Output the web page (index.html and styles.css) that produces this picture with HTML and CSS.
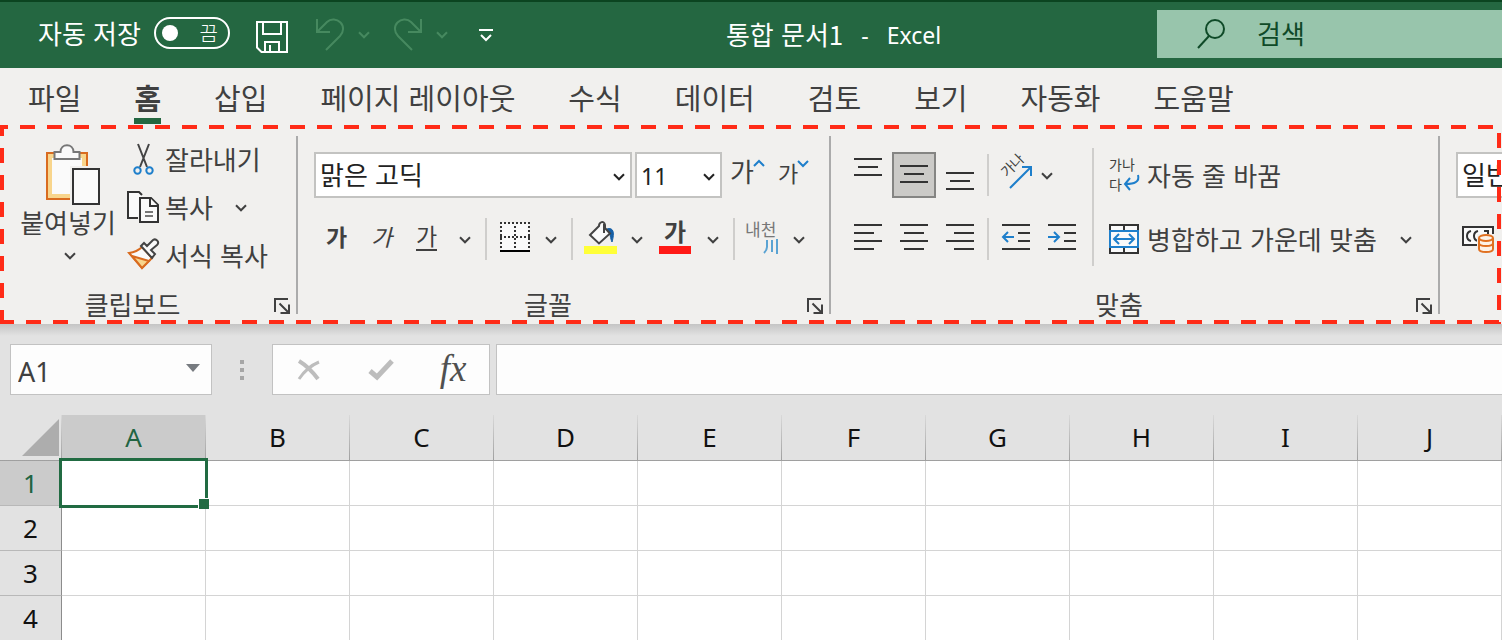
FILE: index.html
```html
<!DOCTYPE html>
<html lang="ko">
<head>
<meta charset="utf-8">
<meta name="viewport" content="width=device-width, initial-scale=1">
<title>통합 문서1 - Excel</title>
<link rel="stylesheet" href="styles.css">
</head>
<body>
<svg class="defs" aria-hidden="true">
  <symbol id="chevron" viewBox="0 0 12 8"><path d="M1 1.3 6 6.3 11 1.3" fill="none" stroke="currentColor" stroke-width="2"/></symbol>
  <symbol id="launcher" viewBox="0 0 18 18"><path d="M2 15V2H15M6.500 6.500 15 15M16 7.500V16H7.500" fill="none" stroke="currentColor" stroke-width="2"/></symbol>
</svg>

<header class="titlebar">
  <div class="quick">
    <span id="autosave">자동 저장</span>
    <button class="toggle" role="switch" aria-checked="false" aria-labelledby="autosave"><span class="knob"></span><span>끔</span></button>
    <button class="quick-btn save" aria-label="저장">
      <svg width="32" height="32" viewBox="0 0 32 32" fill="none" stroke="currentColor" stroke-width="2"><path d="M1 1H31V31H5.500L1 26.500ZM7 1V13H25V1M9 31V21H23V31M14 24V31"/></svg>
    </button>
    <button class="quick-btn dim" aria-label="실행 취소">
      <svg width="30" height="34" viewBox="0 0 30 34" fill="none" stroke="currentColor" stroke-width="2"><path d="M2 1V14H15M2 14 12 4C16 0 22 1 25.500 4.500S29 14 25 18L11 32"/></svg>
    </button>
    <button class="quick-more dim" aria-label="실행 취소 목록"><svg class="chev"><use href="#chevron"/></svg></button>
    <button class="quick-btn dim" aria-label="다시 실행">
      <svg width="30" height="34" viewBox="0 0 30 34" fill="none" stroke="currentColor" stroke-width="2"><path d="M28 1V14H15M28 14 18 4C14 0 8 1 4.500 4.500S1 14 5 18L19 32"/></svg>
    </button>
    <button class="quick-more dim" aria-label="다시 실행 목록"><svg class="chev"><use href="#chevron"/></svg></button>
    <button class="quick-more custom" aria-label="빠른 실행 도구 모음 사용자 지정">
      <svg width="16" height="14" viewBox="0 0 16 14" fill="none" stroke="currentColor" stroke-width="2"><path d="M1 2H15M3 7 8 12 13 7"/></svg>
    </button>
  </div>
  <h1 class="title"><span>통합 문서1</span><span class="latin">-</span><span class="latin">Excel</span></h1>
  <label class="search">
    <svg width="30" height="32" viewBox="0 0 30 32" fill="none" stroke="currentColor" stroke-width="2"><circle cx="18" cy="11" r="9"/><path d="M12 18 1 30"/></svg>
    <input type="search" placeholder="검색" aria-label="검색">
  </label>
</header>

<nav class="tabs">
  <a href="#file">파일</a>
  <a href="#home" class="current" aria-current="page">홈</a>
  <a href="#insert">삽입</a>
  <a href="#layout">페이지 레이아웃</a>
  <a href="#formulas">수식</a>
  <a href="#data">데이터</a>
  <a href="#review">검토</a>
  <a href="#view">보기</a>
  <a href="#automate">자동화</a>
  <a href="#help">도움말</a>
</nav>

<div class="ribbon">
  <section class="group clipboard">
    <div class="group-body">
      <button class="paste">
        <svg width="56" height="62" viewBox="0 0 56 62">
          <path d="M2 9H42V55H2Z" fill="#f8d58c" stroke="#d96b1f" stroke-width="2"/>
          <path d="M7 14H37V50H7Z" fill="#fafafa"/>
          <path d="M9.500 15V8H15.500C15.500 -1 28.500 -1 28.500 8H34.500V15Z" fill="#fafafa" stroke="#777" stroke-width="2"/>
          <path d="M25 22H56V62H25Z" fill="#f1f0ee"/>
          <path d="M28 25H54V60H28Z" fill="#fafafa" stroke="#333" stroke-width="2"/>
        </svg>
        <span>붙여넣기</span>
        <svg class="chev"><use href="#chevron"/></svg>
      </button>
      <div class="commands">
        <button class="command">
          <svg width="32" height="34" viewBox="0 0 32 34" fill="none" stroke-width="2"><path d="M11 2 20 25M22 2 13 25" stroke="#444"/><circle cx="10.500" cy="28.500" r="3.200" stroke="#1e7fcb"/><circle cx="22.500" cy="28.500" r="3.200" stroke="#1e7fcb"/></svg>
          <span>잘라내기</span>
        </button>
        <button class="command">
          <svg width="32" height="34" viewBox="0 0 32 34" fill="#fafafa" stroke="#333" stroke-width="2"><path d="M11 28H1V2H12L15 5"/><path d="M13 8H24L31 15V32H13Z"/><path d="M23 8V16H31"/><path d="M18 22H26M18 26H26" stroke="#777"/></svg>
          <span>복사</span>
          <svg class="chev"><use href="#chevron"/></svg>
        </button>
        <button class="command">
          <svg width="32" height="34" viewBox="0 0 32 34" stroke-width="2"><path d="M2 15Q10 14 15 9L25 20 15 30Z" fill="#fafafa" stroke="#d96b1f"/><path d="M5 18 22 23 15 30Z" fill="#f8d58c" stroke="#d96b1f"/><path d="M14 8 17 5 20 8 26 2C29 0 33 4 30 7L24 12 28 16 25 20Z" fill="#fafafa" stroke="#444"/></svg>
          <span>서식 복사</span>
        </button>
      </div>
    </div>
    <div class="group-foot"><h2>클립보드</h2><button class="launch" aria-label="클립보드 옵션"><svg width="18" height="18"><use href="#launcher"/></svg></button></div>
  </section>
  <div class="divider"></div>

  <section class="group font">
    <div class="group-body rows">
      <div class="row">
        <div class="combo font-name"><select aria-label="글꼴"><option>맑은 고딕</option></select><svg class="chev"><use href="#chevron"/></svg></div>
        <div class="combo font-size"><select aria-label="글꼴 크기"><option>11</option></select><svg class="chev"><use href="#chevron"/></svg></div>
        <button class="tool" aria-label="글꼴 크기 크게"><svg width="34" height="34" viewBox="0 0 34 34"><text x="-2" y="26" font-size="26">가</text><path d="M22 10 27 5 32 10" fill="none" stroke="#1e7fcb" stroke-width="2"/></svg></button>
        <button class="tool" aria-label="글꼴 크기 작게"><svg width="34" height="34" viewBox="0 0 34 34"><text x="2" y="26" font-size="22">가</text><path d="M22 5 27 10 32 5" fill="none" stroke="#1e7fcb" stroke-width="2"/></svg></button>
      </div>
      <div class="row">
        <button class="tool letter bold" aria-label="굵게">가</button>
        <button class="tool letter italic" aria-label="기울임꼴">가</button>
        <button class="tool letter" aria-label="밑줄"><span class="under">가</span></button>
        <button class="drop" aria-label="밑줄 종류"><svg class="chev"><use href="#chevron"/></svg></button>
        <span class="sep"></span>
        <button class="tool" aria-label="테두리">
          <svg width="32" height="32" viewBox="0 0 32 32" fill="none" stroke="#333" stroke-width="2"><path d="M2 2H30V29H2Z" fill="#fafafa" stroke="none"/><path d="M1 2H31M1 16H31M2 5V28M16 5V28M30 5V28" stroke-dasharray="2 2"/><path d="M1 30H31" stroke="#000"/></svg>
        </button>
        <button class="drop" aria-label="테두리 종류"><svg class="chev"><use href="#chevron"/></svg></button>
        <span class="sep"></span>
        <button class="tool" aria-label="채우기 색">
          <svg width="34" height="34" viewBox="0 0 34 34"><path d="M0 26H33V34H0Z" fill="#ffff38"/><path d="M23 9C29 7 31 12 28 22 26 18 27 14 23 9Z" fill="#155fa6" stroke="#155fa6"/><path d="M6 15 15 6C15 2 20 0 21 5V8L26 13.500 15 23.500Z" fill="#fafafa" stroke="#444" stroke-width="2"/><path d="M20 4V13" stroke="#444" stroke-width="2"/></svg>
        </button>
        <button class="drop" aria-label="채우기 색 목록"><svg class="chev"><use href="#chevron"/></svg></button>
        <button class="tool wide" aria-label="글꼴 색">
          <svg width="34" height="34" viewBox="0 0 34 34"><text x="6" y="21" font-size="24" font-weight="700">가</text><path d="M1 26H33V34H1Z" fill="#ff1a16"/></svg>
        </button>
        <button class="drop" aria-label="글꼴 색 목록"><svg class="chev"><use href="#chevron"/></svg></button>
        <span class="sep"></span>
        <button class="tool" aria-label="윗주 필드">
          <svg width="36" height="36" viewBox="0 0 36 36"><text x="0" y="17" font-size="17" class="pale">내천</text><path d="M22 21V28Q22 31 19 34M27 21V33M32 20V35" fill="none" stroke="#5aa3d3" stroke-width="2"/></svg>
        </button>
        <button class="drop" aria-label="윗주 목록"><svg class="chev"><use href="#chevron"/></svg></button>
      </div>
    </div>
    <div class="group-foot"><h2>글꼴</h2><button class="launch" aria-label="글꼴 옵션"><svg width="18" height="18"><use href="#launcher"/></svg></button></div>
  </section>
  <div class="divider"></div>

  <section class="group align">
    <div class="group-body">
      <div class="rows align-tools">
        <div class="row">
          <button class="tool line" aria-label="위쪽 맞춤"><svg width="30" height="36" viewBox="0 0 30 36"><path d="M1 3H29M5 11H25M1 19H29"/></svg></button>
          <button class="tool line pressed" aria-label="가운데 맞춤(세로)" aria-pressed="true"><svg width="30" height="36" viewBox="0 0 30 36"><path d="M1 9H29M5 17H25M1 25H29"/></svg></button>
          <button class="tool line" aria-label="아래쪽 맞춤"><svg width="30" height="36" viewBox="0 0 30 36"><path d="M1 17H29M5 25H25M1 33H29"/></svg></button>
          <span class="sep snug"></span>
          <button class="tool orient" aria-label="방향">
            <svg width="34" height="34" viewBox="0 0 34 34"><text x="0" y="0" font-size="14" transform="translate(9 22) rotate(-45)">가나</text><path d="M12 32 32 12M24 11H33V20" fill="none" stroke="#1e7fcb" stroke-width="2"/></svg>
          </button>
          <button class="drop slim" aria-label="방향 목록"><svg class="chev"><use href="#chevron"/></svg></button>
        </div>
        <div class="row">
          <button class="tool line" aria-label="왼쪽 맞춤"><svg width="30" height="36" viewBox="0 0 30 36"><path d="M1 5H29M1 13H21M1 21H29M1 29H21"/></svg></button>
          <button class="tool line" aria-label="가운데 맞춤"><svg width="30" height="36" viewBox="0 0 30 36"><path d="M1 5H29M5 13H25M1 21H29M5 29H25"/></svg></button>
          <button class="tool line" aria-label="오른쪽 맞춤"><svg width="30" height="36" viewBox="0 0 30 36"><path d="M1 5H29M9 13H29M1 21H29M9 29H29"/></svg></button>
          <span class="sep snug"></span>
          <button class="tool line" aria-label="내어쓰기"><svg width="30" height="36" viewBox="0 0 30 36"><path d="M1 5H29M17 13H29M17 21H29M1 29H29"/><path class="blue" d="M13 17H2M7 12 2 17 7 22"/></svg></button>
          <button class="tool line" aria-label="들여쓰기"><svg width="30" height="36" viewBox="0 0 30 36"><path d="M1 5H29M17 13H29M17 21H29M1 29H29"/><path class="blue" d="M1 17H12M7 12 12 17 7 22"/></svg></button>
        </div>
      </div>
      <div class="rows align-text">
        <button class="row command">
          <svg width="32" height="36" viewBox="0 0 32 36"><text x="1" y="13" font-size="14">가나</text><text x="1" y="33" font-size="14">다</text><path d="M30 18C32 25 26 27 18 27M22 21 17 27 22 33" fill="none" stroke="#1e7fcb" stroke-width="2"/></svg>
          <span>자동 줄 바꿈</span>
        </button>
        <button class="row command">
          <svg width="32" height="32" viewBox="0 0 32 32" fill="none" stroke-width="2"><path d="M2 2H30V30H2ZM16 2V9M16 24V30" fill="#fafafa" stroke="#333"/><path d="M2 8H30V24H2Z" fill="#fafafa" stroke="#1e7fcb"/><path d="M6 16H26M11 11 6 16 11 21M21 11 26 16 21 21" stroke="#1e7fcb"/></svg>
          <span>병합하고 가운데 맞춤</span>
          <svg class="chev"><use href="#chevron"/></svg>
        </button>
      </div>
    </div>
    <div class="group-foot"><h2>맞춤</h2><button class="launch" aria-label="맞춤 옵션"><svg width="18" height="18"><use href="#launcher"/></svg></button></div>
  </section>
  <div class="divider"></div>

  <section class="group number">
    <div class="group-body rows">
      <div class="row"><div class="combo format"><select aria-label="표시 형식"><option>일반</option></select><svg class="chev"><use href="#chevron"/></svg></div></div>
      <div class="row">
        <button class="tool currency" aria-label="회계 표시 형식">
          <svg width="34" height="30" viewBox="0 0 34 30" fill="none" stroke="#333" stroke-width="2"><path d="M1 3H31V21H1Z" fill="#fafafa"/><path d="M9 7Q5 8 5 12T9 17M16 7Q12 8 12 12T16 17M22 7H26V10"/><path d="M15 10H34V30H15Z" fill="#f1f0ee" stroke="none"/><path d="M17 14V25C17 29 31 29 31 25V14" fill="#fdf3e8" stroke="#e07020"/><ellipse cx="24" cy="14" rx="7" ry="3" fill="#fdf3e8" stroke="#e07020"/><path d="M17 19C17 23 31 23 31 19" stroke="#e07020"/></svg>
        </button>
      </div>
    </div>
  </section>
</div>

<div class="formula-bar">
  <div class="name-box"><input type="text" value="A1" aria-label="이름 상자"><button aria-label="이름 목록"><svg width="14" height="8" viewBox="0 0 14 8"><path d="M0 0H14L7 8Z" fill="#777b80"/></svg></button></div>
  <svg class="grip" width="4" height="20" viewBox="0 0 4 20"><path d="M0 0H4V4H0ZM0 8H4V12H0ZM0 16H4V20H0Z" fill="#a6a6a6"/></svg>
  <div class="entry-tools">
    <button aria-label="취소"><svg width="24" height="22" viewBox="0 0 24 22" fill="none" stroke="#bdbdbd"><path d="M2 2Q12 8 21 20" stroke-width="4"/><path d="M2 20Q10 8 22 3" stroke-width="3"/></svg></button>
    <button aria-label="입력"><svg width="26" height="22" viewBox="0 0 26 22" fill="none" stroke="#bdbdbd" stroke-width="5"><path d="M2 12 9 18 24 2"/></svg></button>
    <button class="fx" aria-label="함수 삽입">fx</button>
  </div>
  <input class="formula" type="text" aria-label="수식 입력줄">
</div>

<table class="sheet">
  <thead>
    <tr><th class="corner"><svg width="37" height="37" viewBox="0 0 37 37"><path d="M37 0V37H0Z" fill="#adadad"/></svg></th><th class="active">A</th><th>B</th><th>C</th><th>D</th><th>E</th><th>F</th><th>G</th><th>H</th><th>I</th><th>J</th></tr>
  </thead>
  <tbody>
    <tr><th class="active">1</th><td class="selected"></td><td></td><td></td><td></td><td></td><td></td><td></td><td></td><td></td><td></td></tr>
    <tr><th>2</th><td></td><td></td><td></td><td></td><td></td><td></td><td></td><td></td><td></td><td></td></tr>
    <tr><th>3</th><td></td><td></td><td></td><td></td><td></td><td></td><td></td><td></td><td></td><td></td></tr>
    <tr><th>4</th><td></td><td></td><td></td><td></td><td></td><td></td><td></td><td></td><td></td><td></td></tr>
  </tbody>
</table>
</body>
</html>
```
FILE: styles.css
```css
* { box-sizing: border-box; }

body {
  margin: 0;
  overflow: hidden;
  background: #e2e2e2;
  color: #404040;
  font: 400 26px/32px "Noto Sans CJK KR", sans-serif;
}

button, input, select {
  margin: 0;
  padding: 0;
  border: 0;
  border-radius: 0;
  background: none;
  color: inherit;
  font: inherit;
}

h1, h2 { margin: 0; font: inherit; }
svg { display: block; flex: none; overflow: visible; }
svg text { fill: #404040; font-weight: 400; }
svg text[font-weight="700"] { font-weight: 700; }
svg text.pale { fill: #777; }
.defs { position: absolute; width: 0; height: 0; }
.chev { width: 12px; height: 8px; }

/* Title bar */
.titlebar {
  display: flex;
  height: 68px;
  border-top: 2px solid #0b4420;
  background: #246741;
  color: #fff;
  white-space: nowrap;
}
.quick {
  display: flex;
  flex: none;
  align-items: center;
  width: 510px;
  padding-left: 38px;
}
.quick > span { padding-bottom: 4px; }
.toggle {
  display: flex;
  align-items: center;
  justify-content: space-between;
  width: 76px;
  height: 32px;
  margin: 0 0 4px 13px;
  padding: 0 10px 0 6px;
  border: 2px solid #fff;
  border-radius: 16px;
  font-size: 20px;
  font-weight: 300;
  line-height: 26px;
}
.knob { width: 16px; height: 16px; border-radius: 50%; background: #fff; }
.quick-btn { margin-left: 27px; }
.quick-btn.save { margin-left: 26px; padding-top: 4px; }
.quick-more { padding: 0 0 0 13px; }
.quick-more + .quick-btn { margin-left: 23px; }
.quick-more.custom { padding-left: 30px; }
.dim { color: #46895f; }
.title {
  display: flex;
  flex: 1;
  align-items: center;
  justify-content: center;
  gap: 18px;
}
.title span:first-child { padding-bottom: 2px; }
.latin { font: 400 23px/32px "Noto Sans", sans-serif; }
.search {
  display: flex;
  align-items: center;
  gap: 30px;
  width: 345px;
  height: 48px;
  margin-top: 8px;
  padding-left: 40px;
  background: #98c5ac;
  color: #0f4a28;
}
.search input { flex: 1; min-width: 0; height: 48px; padding-bottom: 4px; outline: 0; }
.search input::placeholder { color: inherit; opacity: 1; }

/* Tabs */
.tabs {
  display: flex;
  gap: 53px;
  height: 57px;
  padding-left: 28px;
  background: #f1f0ee;
  font-size: 29px;
  line-height: 58px;
  white-space: nowrap;
}
.tabs a { height: 56px; color: inherit; text-decoration: none; }
.tabs .current { border-bottom: 6px solid #246741; font-weight: 700; }

/* Ribbon with its dashed highlight frame */
.ribbon {
  position: relative;
  display: flex;
  height: 199px;
  overflow: hidden;
  background: #f1f0ee;
  white-space: nowrap;
}
.ribbon::after {
  content: "";
  position: absolute;
  inset: 0 1px 0 0;
  pointer-events: none;
  background:
    repeating-linear-gradient(90deg, #ff2b17 0 8px, transparent 8px 20px, #ff2b17 20px 27px) top / 100% 4px no-repeat,
    repeating-linear-gradient(90deg, #ff2b17 0 14px, transparent 14px 26px, #ff2b17 26px 27px) bottom / 100% 4px no-repeat,
    repeating-linear-gradient(180deg, #ff2b17 0 11px, transparent 11px 23px, #ff2b17 23px 27px) left / 4px 100% no-repeat,
    repeating-linear-gradient(180deg, transparent 0 8px, #ff2b17 8px 23px, transparent 23px 27px) right / 4px 100% no-repeat;
}
.divider { flex: none; width: 2px; margin: 11px 0 10px; background: #ababab; }
.group { display: flex; flex: none; flex-direction: column; padding-top: 18px; }
.group.clipboard { width: 296px; padding-top: 10px; }
.group.font { width: 531px; }
.group.align { width: 607px; }
.group.number { flex: 1; min-width: 0; }
.group-body { display: flex; flex: 1; }
.group-foot { display: flex; align-items: center; height: 34px; padding: 0 5px 6px 0; }
.group-foot h2 { flex: 1; text-align: center; }
.launch { width: 18px; height: 18px; margin: 4px 0 0 8px; }

.paste {
  display: flex;
  flex-direction: column;
  align-items: center;
  align-self: flex-start;
  width: 96px;
  margin: 9px 0 0 20px;
}
.paste > svg:first-child { margin-left: 10px; }
.paste .chev { margin: 14px 0 0 4px; }
.commands { display: flex; flex-direction: column; margin-left: 11px; }
.command { display: flex; align-items: center; gap: 6px; height: 48px; }
.command .chev { margin: 2px 0 0 16px; }

.rows { display: flex; flex-direction: column; }
.row { display: flex; flex: none; align-items: center; height: 64px; }
.font .row { padding-left: 16px; }
.combo { display: grid; align-items: center; height: 46px; margin-right: 3px; border: 2px solid #c3c3c1; background: #fff; color: #222; }
.combo select { grid-area: 1 / 1; width: 100%; height: 42px; padding: 0 28px 2px 4px; appearance: none; }
.combo .chev { grid-area: 1 / 1; justify-self: end; margin: 4px 5px 0 0; pointer-events: none; }
.font-name { width: 318px; }
.font-size { width: 87px; }
.font-size select { padding-top: 4px; font: 400 23px/36px "Noto Sans", sans-serif; }
.tool { display: flex; align-items: center; justify-content: center; flex: none; width: 40px; height: 46px; padding-bottom: 4px; }
.combo + .tool { width: 48px; }
.tool.letter { width: 45px; padding-bottom: 6px; font-size: 23px; }
.tool.bold { font-weight: 700; }
.tool.italic { font-style: italic; }
.under { height: 30px; border-bottom: 2px solid #404040; line-height: 28px; }
.tool.wide { width: 44px; }
.drop { display: flex; align-items: center; justify-content: center; flex: none; width: 32px; height: 46px; padding-top: 2px; }
.drop.slim { width: 28px; }
.sep { flex: none; width: 2px; height: 42px; margin: 0 8px 0 4px; background: #cfcecc; }
.sep.snug { margin: 0 4px; }
.align-tools { padding-left: 14px; }
.tool.line { width: 46px; padding-bottom: 2px; }
.tool.line path { fill: none; stroke: #333; stroke-width: 2; }
.tool.line path.blue { stroke: #1e7fcb; }
.tool.line.pressed { width: 44px; margin: 0 1px; padding: 0; border: 2px solid #858583; background: #cbcac7; }
.tool.orient { padding-left: 4px; }
.align-text { height: 118px; margin: 5px 0 0 7px; padding-left: 14px; border-left: 2px solid #cfcecc; justify-content: center; }
.align-text .command { gap: 7px; }
.number { padding-left: 16px; }
.format { flex: none; width: 180px; }
.currency { margin-left: 3px; padding: 0; }

/* Formula bar */
.formula-bar {
  display: flex;
  align-items: center;
  height: 91px;
  padding: 0 0 0 10px;
  background: linear-gradient(#c4c4c4, #e2e2e2 12px);
  font-family: "Noto Sans", sans-serif;
}
.name-box, .entry-tools, .formula { height: 51px; border: 1px solid #c2c2c2; background: #fdfdfd; }
.name-box { display: flex; width: 202px; }
.name-box input { flex: 1; min-width: 0; padding: 4px 0 0 7px; font-size: 27px; }
.name-box button { width: 36px; padding: 0 0 4px 11px; }
.grip { margin: 0 28px; }
.entry-tools { display: flex; width: 218px; }
.entry-tools button { display: flex; flex: 1; align-items: center; justify-content: center; }
.entry-tools .fx { padding-bottom: 2px; color: #505050; font: italic 400 37px/40px "Liberation Serif", serif; }
.formula { flex: 1; min-width: 0; margin-left: 6px; border-right: 0; }

/* Sheet */
.sheet {
  width: 100%;
  table-layout: fixed;
  border-spacing: 0;
  background: #fff;
  color: #111;
  font: 400 26px/32px "Noto Sans", sans-serif;
}
.sheet th, .sheet td { height: 45px; padding: 0; font-weight: inherit; }
.sheet td { border-right: 1px solid #d4d4d4; border-bottom: 1px solid #d4d4d4; }
.sheet thead th {
  height: 46px;
  padding-bottom: 2px;
  border-right: 1px solid;
  border-bottom: 1px solid #9f9f9f;
  border-image: linear-gradient(#dadada, #9f9f9f) 1;
  background: #e2e2e2;
}
.sheet thead .corner { width: 62px; padding-bottom: 0; }
.corner svg { margin-left: 22px; }
.sheet tbody th { border-right: 1px solid #8c8c8c; border-bottom: 1px solid #b8b8b8; background: #e2e2e2; }
.sheet thead .active, .sheet tbody .active { background: #cbcbcb; color: #216442; }
.selected { position: relative; }
.selected::before { content: ""; position: absolute; inset: -3px; border: 3px solid #216b42; }
.selected::after { content: ""; position: absolute; right: -4px; bottom: -4px; width: 10px; height: 10px; border: 1px solid #fff; border-width: 1px 0 0 1px; background: #216b42; }
```
